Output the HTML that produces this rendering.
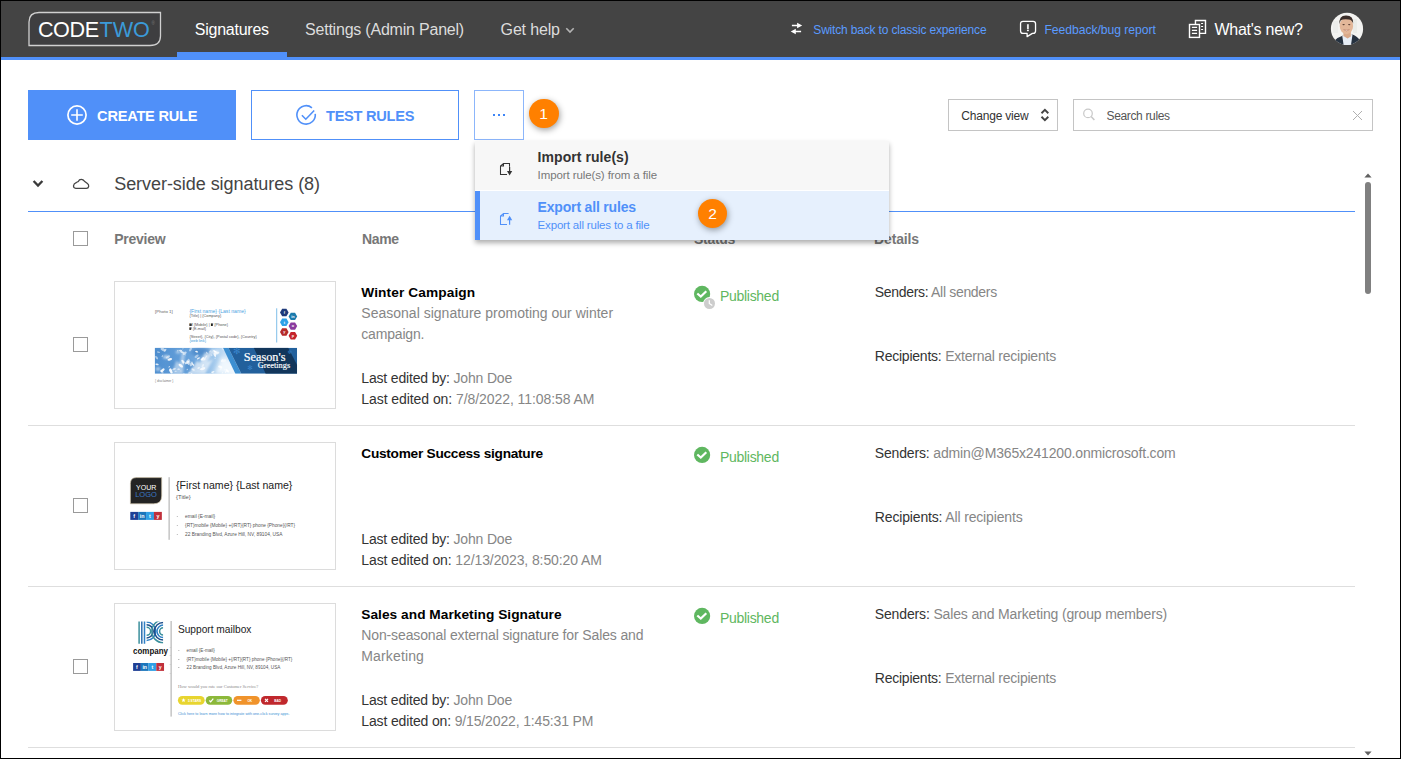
<!DOCTYPE html>
<html lang="en"><head><meta charset="utf-8"><title>CodeTwo Signatures</title>
<style>
html,body{margin:0;padding:0;background:#fff;}
body{width:1401px;height:759px;position:relative;overflow:hidden;font-family:"Liberation Sans",Arial,sans-serif;}
.a{position:absolute;box-sizing:border-box;}
.t{position:absolute;white-space:nowrap;line-height:1;}
svg{position:absolute;overflow:visible;}
</style></head><body>
<div class="a" style="left:0.00px;top:0.00px;width:1401.00px;height:57.00px;background:#444444;"></div>
<div class="a" style="left:0.00px;top:57.00px;width:1401.00px;height:3.00px;background:#5090f9;"></div>
<div class="a" style="left:177.00px;top:52.00px;width:110.00px;height:5.00px;background:#5090f9;"></div>
<svg style="left:0;top:0" width="200" height="60" viewBox="0 0 200 60"><path d="M39 12.5 H160.5 V36 Q160.5 45.5 150 45.5 H29 V22 Q29 12.5 39 12.5 Z" fill="#3e3e40" stroke="#d0d0d0" stroke-width="1.3"/></svg>
<div class="t " style="left:37.90px;top:19.00px;font-size:21.60px;color:#ffffff;letter-spacing:-0.402px;">CODE</div>
<div class="t " style="left:99.50px;top:19.00px;font-size:21.60px;color:#3b9ad9;letter-spacing:0.006px;">TWO</div>
<div class="t " style="left:151.50px;top:22.00px;font-size:4.50px;color:#777;">®</div>
<div class="t " style="left:194.80px;top:22.00px;font-size:16.00px;color:#ffffff;letter-spacing:-0.249px;">Signatures</div>
<div class="t " style="left:305.00px;top:22.00px;font-size:16.00px;color:#dcdcdc;letter-spacing:-0.211px;">Settings (Admin Panel)</div>
<div class="t " style="left:500.60px;top:22.00px;font-size:16.00px;color:#dcdcdc;letter-spacing:-0.161px;">Get help</div>
<svg style="left:565px;top:25px" width="10" height="10" viewBox="0 0 10 10"><path d="M1.3 3.3 L5 7.1 L8.7 3.3" fill="none" stroke="#b4b4b4" stroke-width="1.6"/></svg>
<svg style="left:789px;top:21px" width="15" height="15" viewBox="0 0 15 15"><path d="M2.9 4.5 H9 M6 10.5 H12.1" fill="none" stroke="#fff" stroke-width="1.5"/><path d="M8.1 1.7 L13.2 4.5 L8.1 7.3 Z M6.8 7.7 L1.7 10.5 L6.8 13.3 Z" fill="#fff"/></svg>
<div class="t " style="left:813.30px;top:24.00px;font-size:12.00px;color:#5a9bff;letter-spacing:-0.171px;">Switch back to classic experience</div>
<svg style="left:1019px;top:20px" width="19" height="18" viewBox="0 0 19 18"><path d="M4 1.35 H14.1 Q16.55 1.35 16.55 3.8 V10.9 Q16.55 13.35 14.1 13.35 H13.4 L8.1 16.6 V13.35 H4 Q1.55 13.35 1.55 10.9 V3.8 Q1.55 1.35 4 1.35 Z" fill="none" stroke="#fff" stroke-width="1.3" stroke-linejoin="round"/><path d="M8.9 4.2 V9.2" stroke="#e8e8e8" stroke-width="1.9"/><rect x="7.95" y="9.8" width="1.9" height="1.4" fill="#fff"/></svg>
<div class="t " style="left:1044.40px;top:24.00px;font-size:12.20px;color:#5a9bff;letter-spacing:-0.052px;">Feedback/bug report</div>
<svg style="left:1188px;top:19px" width="20" height="20" viewBox="0 0 20 20"><g fill="none" stroke="#fff" stroke-width="1.4"><rect x="1.5" y="5.5" width="10" height="12.9"/><path d="M7.45 5.5 V1.55 H17.5 V14.4 H11.5"/></g><g fill="none" stroke="#fff" stroke-width="1.1"><path d="M3.9 8.4 H9.1 M3.9 11.4 H9.1 M3.9 14.4 H9.1"/><path d="M13.1 4.5 H15.1 M13.1 7.5 H15.1 M13.1 10.5 H15.1"/></g></svg>
<div class="t " style="left:1214.50px;top:22.00px;font-size:16.00px;color:#ffffff;letter-spacing:-0.263px;">What's new?</div>
<svg style="left:1331px;top:13px" width="32" height="32" viewBox="0 0 32 32"><defs><clipPath id="av"><circle cx="16" cy="15.9" r="16.1"/></clipPath><filter id="avb" x="-10%" y="-10%" width="120%" height="120%"><feGaussianBlur stdDeviation="0.55"/></filter></defs>
<g clip-path="url(#av)"><rect x="-2" y="-2" width="36" height="36" fill="#f3f3f1"/><g filter="url(#avb)">
<rect x="22" y="6" width="4" height="14" fill="#eaece8"/><rect x="2" y="8" width="5" height="12" fill="#ecedeb"/>
<path d="M2 34 L4.2 27 Q7 24.2 12 22.4 L15.5 30 L21 21.2 Q27 23.6 28.6 27 L31 34 Z" fill="#27303f"/>
<path d="M11.2 22.6 L12.6 32 H20 L21.6 21 L17 24.5 Z" fill="#e6edf6"/>
<path d="M12.4 18 H19.8 V23.6 L16.6 25.6 L12.4 23 Z" fill="#d9a98a"/>
<ellipse cx="15.4" cy="12.9" rx="6.7" ry="8.3" fill="#e3b799"/>
<path d="M8.5 11.5 Q7.6 2.2 15.2 2.4 Q22.6 2.4 22.2 10.6 Q21 6.6 17.6 6.4 Q12 5.6 9.6 7.6 Q8.8 9.4 8.5 11.5 Z" fill="#3b2f2a"/>
<ellipse cx="12.6" cy="11.6" rx="1.2" ry="0.6" fill="#5b4034"/><ellipse cx="18.2" cy="11.6" rx="1.2" ry="0.6" fill="#5b4034"/>
<path d="M12.6 16.6 Q15.4 19.4 18.4 16.6 Q15.4 17.6 12.6 16.6 Z" fill="#f7efe9" stroke="#b77a66" stroke-width="0.5"/>
</g></g></svg>
<div class="a" style="left:28.00px;top:90.00px;width:208.00px;height:50.00px;background:#5090f9;"></div>
<svg style="left:66px;top:104px" width="22" height="22" viewBox="0 0 22 22"><circle cx="11" cy="11" r="9.1" fill="none" stroke="#fff" stroke-width="1.7"/><path d="M11 5.2 V16.8 M5.2 11 H16.8" stroke="#fff" stroke-width="1.6"/></svg>
<div class="t " style="left:97.10px;top:109.00px;font-size:14.60px;color:#ffffff;letter-spacing:-0.231px;font-weight:bold;">CREATE RULE</div>
<div class="a" style="left:251.00px;top:90.00px;width:208.00px;height:50.00px;border:1px solid #5090f9;background:#fff;"></div>
<svg style="left:295px;top:104px" width="22" height="22" viewBox="0 0 22 22"><path d="M20.23 9.78 A9.2 9.2 0 1 1 16.94 3.79" fill="none" stroke="#5090f9" stroke-width="1.6"/><path d="M6.9 11.3 L10.8 15.2 L19.2 6.5" fill="none" stroke="#5090f9" stroke-width="1.6"/></svg>
<div class="t " style="left:326.00px;top:109.00px;font-size:14.60px;color:#5090f9;letter-spacing:-0.265px;font-weight:bold;">TEST RULES</div>
<div class="a" style="left:474.00px;top:90.00px;width:50.00px;height:50.00px;border:1px solid #8cb6fb;background:#fff;"></div>
<div class="a" style="left:493.00px;top:114.00px;width:2.00px;height:2.00px;background:#3d85f7;"></div>
<div class="a" style="left:498.00px;top:114.00px;width:2.00px;height:2.00px;background:#3d85f7;"></div>
<div class="a" style="left:503.00px;top:114.00px;width:2.00px;height:2.00px;background:#3d85f7;"></div>
<div class="a" style="left:528.70px;top:98.60px;width:29.90px;height:29.90px;background:#ff8000;border-radius:50%;box-shadow:1px 2px 6px rgba(0,0,0,0.38);"></div>
<div class="t " style="left:539.30px;top:106.00px;font-size:15.50px;color:#fff;">1</div>
<div class="a" style="left:948.00px;top:99.00px;width:110.00px;height:32.00px;border:1px solid #c4c4c4;background:#fff;"></div>
<div class="t " style="left:961.30px;top:110.00px;font-size:12.00px;color:#333;letter-spacing:-0.198px;">Change view</div>
<svg style="left:1040px;top:108px" width="11" height="14" viewBox="0 0 11 14"><path d="M1.5 5.2 L4.9 1.9 L8.3 5.2 M1.5 8.8 L4.9 12.1 L8.3 8.8" fill="none" stroke="#444" stroke-width="1.9"/></svg>
<div class="a" style="left:1073.00px;top:99.00px;width:300.00px;height:32.00px;border:1px solid #c4c4c4;background:#fff;"></div>
<svg style="left:1082px;top:107px" width="14" height="14" viewBox="0 0 14 14"><circle cx="6" cy="6.4" r="4.3" fill="none" stroke="#c8c8c8" stroke-width="1.2"/><path d="M9.1 9.5 L12.4 13.1" stroke="#c8c8c8" stroke-width="1.5"/></svg>
<div class="t " style="left:1106.50px;top:110.00px;font-size:12.00px;color:#555;letter-spacing:-0.347px;">Search rules</div>
<svg style="left:1352px;top:110px" width="11" height="11" viewBox="0 0 11 11"><path d="M1 1 L10 10 M10 1 L1 10" stroke="#b0b0b0" stroke-width="1"/></svg>
<svg style="left:32px;top:179px" width="12" height="10" viewBox="0 0 12 10"><path d="M1.6 2 L6 6.6 L10.4 2" fill="none" stroke="#3a3a3a" stroke-width="2.3"/></svg>
<svg style="left:72px;top:178px" width="19" height="13" viewBox="0 0 19 13"><path d="M3.8 10.4 Q1.4 10.2 1.5 7.9 Q1.7 5.6 4.2 4.7 Q4.9 3.5 6.3 3.5 Q7.2 1.4 9.2 1.4 Q11.2 1.4 12.4 3.2 L15.4 5.6 Q16.9 6.8 16.7 8.4 Q16.4 10.4 14.4 10.4 Z" fill="none" stroke="#444" stroke-width="1.25" stroke-linejoin="round"/></svg>
<div class="t " style="left:114.20px;top:175.00px;font-size:18.00px;color:#444;letter-spacing:-0.049px;">Server-side signatures (8)</div>
<div class="a" style="left:28.00px;top:211.00px;width:1327.00px;height:1.00px;background:#5090f9;"></div>
<div class="a" style="left:73.00px;top:231.00px;width:15.00px;height:15.00px;border:1px solid #9a9a9a;background:#fff;"></div>
<div class="t " style="left:114.20px;top:232.00px;font-size:14.00px;color:#777;letter-spacing:-0.232px;font-weight:bold;">Preview</div>
<div class="t " style="left:362.00px;top:232.00px;font-size:14.00px;color:#777;letter-spacing:-0.333px;font-weight:bold;">Name</div>
<div class="t " style="left:694.00px;top:232.00px;font-size:14.00px;color:#777;letter-spacing:-0.298px;font-weight:bold;">Status</div>
<div class="t " style="left:874.00px;top:232.00px;font-size:14.00px;color:#777;letter-spacing:-0.130px;font-weight:bold;">Details</div>
<div class="a" style="left:28.00px;top:425.00px;width:1327.00px;height:1.00px;background:#dedede;"></div>
<div class="a" style="left:73.00px;top:337.00px;width:15.00px;height:15.00px;border:1px solid #9a9a9a;background:#fff;"></div>
<div class="a" style="left:114.00px;top:281.00px;width:222.00px;height:128.00px;border:1px solid #dcdcdc;background:#fff;"></div>
<div class="t " style="left:361.30px;top:286.00px;font-size:13.70px;color:#000;letter-spacing:0.105px;font-weight:bold;">Winter Campaign</div>
<div class="t " style="left:361.30px;top:306.00px;font-size:14.00px;color:#868686;letter-spacing:0.011px;">Seasonal signature promoting our winter</div>
<div class="t " style="left:361.30px;top:327.00px;font-size:14.00px;color:#868686;letter-spacing:-0.177px;">campaign.</div>
<div class="t" style="left:361.30px;top:371.00px;font-size:14.00px;letter-spacing:-0.170px;"><span style="color:#333">Last edited by: </span><span style="color:#868686">John Doe</span></div>
<div class="t" style="left:361.30px;top:392.00px;font-size:14.00px;letter-spacing:-0.067px;"><span style="color:#333">Last edited on: </span><span style="color:#868686">7/8/2022, 11:08:58 AM</span></div>
<svg style="left:694px;top:286px" width="24" height="26" viewBox="0 0 24 26"><circle cx="8.1" cy="7.9" r="8.1" fill="#5fb760"/><path d="M3.3 7.5 L6.8 10.6 L12.3 5.3" fill="none" stroke="#fff" stroke-width="2.2"/><circle cx="15.5" cy="17.5" r="6.4" fill="#fff"/><circle cx="15.5" cy="17.5" r="5.5" fill="#cdcdcd"/><path d="M15.3 14.2 V17.4 L18.3 19.4" fill="none" stroke="#fff" stroke-width="1.2"/></svg>
<div class="t " style="left:719.90px;top:289.00px;font-size:14.00px;color:#5fb760;letter-spacing:-0.277px;">Published</div>
<div class="t" style="left:874.80px;top:285.00px;font-size:14.00px;letter-spacing:-0.320px;"><span style="color:#333">Senders: </span><span style="color:#868686">All senders</span></div>
<div class="t" style="left:874.80px;top:349.00px;font-size:14.00px;letter-spacing:-0.233px;"><span style="color:#333">Recipients: </span><span style="color:#868686">External recipients</span></div>
<div class="a" style="left:28.00px;top:586.00px;width:1327.00px;height:1.00px;background:#dedede;"></div>
<div class="a" style="left:73.00px;top:498.00px;width:15.00px;height:15.00px;border:1px solid #9a9a9a;background:#fff;"></div>
<div class="a" style="left:114.00px;top:442.00px;width:222.00px;height:128.00px;border:1px solid #dcdcdc;background:#fff;"></div>
<div class="t " style="left:361.30px;top:447.00px;font-size:13.70px;color:#000;letter-spacing:-0.274px;font-weight:bold;">Customer Success signature</div>
<div class="t" style="left:361.30px;top:532.00px;font-size:14.00px;letter-spacing:-0.170px;"><span style="color:#333">Last edited by: </span><span style="color:#868686">John Doe</span></div>
<div class="t" style="left:361.30px;top:553.00px;font-size:14.00px;letter-spacing:-0.106px;"><span style="color:#333">Last edited on: </span><span style="color:#868686">12/13/2023, 8:50:20 AM</span></div>
<svg style="left:694px;top:447px" width="24" height="26" viewBox="0 0 24 26"><circle cx="8.1" cy="7.9" r="8.1" fill="#5fb760"/><path d="M3.3 7.5 L6.8 10.6 L12.3 5.3" fill="none" stroke="#fff" stroke-width="2.2"/></svg>
<div class="t " style="left:719.90px;top:450.00px;font-size:14.00px;color:#5fb760;letter-spacing:-0.277px;">Published</div>
<div class="t" style="left:874.80px;top:446.00px;font-size:14.00px;letter-spacing:-0.162px;"><span style="color:#333">Senders: </span><span style="color:#868686">admin@M365x241200.onmicrosoft.com</span></div>
<div class="t" style="left:874.80px;top:510.00px;font-size:14.00px;letter-spacing:-0.155px;"><span style="color:#333">Recipients: </span><span style="color:#868686">All recipients</span></div>
<div class="a" style="left:28.00px;top:747.00px;width:1327.00px;height:1.00px;background:#dedede;"></div>
<div class="a" style="left:73.00px;top:659.00px;width:15.00px;height:15.00px;border:1px solid #9a9a9a;background:#fff;"></div>
<div class="a" style="left:114.00px;top:603.00px;width:222.00px;height:128.00px;border:1px solid #dcdcdc;background:#fff;"></div>
<div class="t " style="left:361.30px;top:608.00px;font-size:13.70px;color:#000;letter-spacing:0.036px;font-weight:bold;">Sales and Marketing Signature</div>
<div class="t " style="left:361.30px;top:628.00px;font-size:14.00px;color:#868686;letter-spacing:-0.130px;">Non-seasonal external signature for Sales and</div>
<div class="t " style="left:361.30px;top:649.00px;font-size:14.00px;color:#868686;letter-spacing:0.137px;">Marketing</div>
<div class="t" style="left:361.30px;top:693.00px;font-size:14.00px;letter-spacing:-0.170px;"><span style="color:#333">Last edited by: </span><span style="color:#868686">John Doe</span></div>
<div class="t" style="left:361.30px;top:714.00px;font-size:14.00px;letter-spacing:-0.146px;"><span style="color:#333">Last edited on: </span><span style="color:#868686">9/15/2022, 1:45:31 PM</span></div>
<svg style="left:694px;top:608px" width="24" height="26" viewBox="0 0 24 26"><circle cx="8.1" cy="7.9" r="8.1" fill="#5fb760"/><path d="M3.3 7.5 L6.8 10.6 L12.3 5.3" fill="none" stroke="#fff" stroke-width="2.2"/></svg>
<div class="t " style="left:719.90px;top:611.00px;font-size:14.00px;color:#5fb760;letter-spacing:-0.277px;">Published</div>
<div class="t" style="left:874.80px;top:607.00px;font-size:14.00px;letter-spacing:-0.150px;"><span style="color:#333">Senders: </span><span style="color:#868686">Sales and Marketing (group members)</span></div>
<div class="t" style="left:874.80px;top:671.00px;font-size:14.00px;letter-spacing:-0.233px;"><span style="color:#333">Recipients: </span><span style="color:#868686">External recipients</span></div>
<svg style="left:0;top:0" width="1401" height="759" viewBox="0 0 1401 759" font-family="Liberation Sans, Arial, sans-serif">
<defs>
<linearGradient id="snow" x1="0" y1="0" x2="1" y2="0"><stop offset="0" stop-color="#4f8fd0"/><stop offset="0.4" stop-color="#69a3dc"/><stop offset="0.72" stop-color="#a9cdee"/><stop offset="0.95" stop-color="#eef6fd"/></linearGradient>
<filter id="bl" x="-20%" y="-20%" width="140%" height="140%"><feGaussianBlur stdDeviation="0.55"/></filter>
<filter id="bl3" x="-30%" y="-30%" width="160%" height="160%"><feGaussianBlur stdDeviation="1.1"/></filter>
<filter id="bl2" x="-30%" y="-30%" width="160%" height="160%"><feGaussianBlur stdDeviation="2"/></filter>
<clipPath id="ban"><rect x="154.7" y="347.7" width="142.4" height="26.1"/></clipPath>
</defs>
<text x="155.00" y="313.00" font-size="3.60" fill="#666" textLength="17.80" lengthAdjust="spacingAndGlyphs">[Photo 1]</text>
<text x="189.40" y="312.80" font-size="5.10" fill="#4aa3df" textLength="56.40" lengthAdjust="spacingAndGlyphs">{First name} {Last name}</text>
<text x="189.40" y="317.20" font-size="3.60" fill="#555" textLength="31.80" lengthAdjust="spacingAndGlyphs">{Title} | {Company}</text>
<text x="189.40" y="326.10" font-size="3.60" fill="#555" textLength="38.60" lengthAdjust="spacingAndGlyphs">M {Mobile} | P {Phone}</text>
<rect x="189.4" y="323.6" width="2.2" height="2.4" fill="#333"/><rect x="211" y="323.6" width="1.8" height="2.4" fill="#222"/><rect x="189.4" y="327.5" width="1.8" height="2.4" fill="#222"/>
<text x="189.40" y="329.90" font-size="3.60" fill="#555" textLength="16.60" lengthAdjust="spacingAndGlyphs">P {E-mail}</text>
<text x="189.40" y="338.20" font-size="3.60" fill="#555" textLength="67.40" lengthAdjust="spacingAndGlyphs">{Street}, {City}, {Postal code}, {Country}</text>
<text x="189.40" y="342.10" font-size="3.60" fill="#3f9ad8" textLength="16.60" lengthAdjust="spacingAndGlyphs">{web link}</text>
<rect x="276.2" y="308.3" width="1" height="34.2" fill="#7fbfe9"/>
<polygon points="288.60,312.50 286.45,316.22 282.15,316.22 280.00,312.50 282.15,308.78 286.45,308.78" fill="#1f3a7a"/>
<text x="284.30" y="313.85" font-size="3.8" font-weight="bold" fill="#fff" text-anchor="middle">f</text>
<polygon points="297.20,316.40 295.05,320.12 290.75,320.12 288.60,316.40 290.75,312.68 295.05,312.68" fill="#1c7bad"/>
<text x="292.90" y="317.75" font-size="3.8" font-weight="bold" fill="#fff" text-anchor="middle">in</text>
<polygon points="288.60,322.30 286.45,326.02 282.15,326.02 280.00,322.30 282.15,318.58 286.45,318.58" fill="#2ea1e8"/>
<text x="284.30" y="323.65" font-size="3.8" font-weight="bold" fill="#fff" text-anchor="middle">t</text>
<polygon points="297.20,326.10 295.05,329.82 290.75,329.82 288.60,326.10 290.75,322.38 295.05,322.38" fill="#8a3a9e"/>
<text x="292.90" y="327.45" font-size="3.8" font-weight="bold" fill="#fff" text-anchor="middle">o</text>
<polygon points="288.60,332.00 286.45,335.72 282.15,335.72 280.00,332.00 282.15,328.28 286.45,328.28" fill="#b52a2a"/>
<text x="284.30" y="333.35" font-size="3.8" font-weight="bold" fill="#fff" text-anchor="middle">y</text>
<polygon points="297.20,335.80 295.05,339.52 290.75,339.52 288.60,335.80 290.75,332.08 295.05,332.08" fill="#c4242b"/>
<text x="292.90" y="337.15" font-size="3.8" font-weight="bold" fill="#fff" text-anchor="middle">p</text>
<g clip-path="url(#ban)">
<rect x="154.7" y="347.7" width="86" height="26.1" fill="url(#snow)"/>
<g filter="url(#bl2)">
<ellipse cx="201" cy="352" rx="10" ry="5" fill="#3f7fc2" opacity="0.75"/>
<ellipse cx="190" cy="366" rx="6" ry="5" fill="#4c8bca" opacity="0.6"/>
<ellipse cx="160" cy="352" rx="5" ry="4" fill="#4c8bca" opacity="0.55"/>
<ellipse cx="172" cy="364" rx="4" ry="3" fill="#4c8bca" opacity="0.5"/>
<path d="M214 374 L222 356 L232 362 L238 374 Z" fill="#f4f9fe" opacity="0.9"/>
</g>
<g filter="url(#bl)" fill="#fff">
<ellipse cx="188.1" cy="362.5" rx="2.6" ry="1.3" opacity="0.68" transform="rotate(60 188.1 362.5)"/>
<ellipse cx="217.1" cy="353.2" rx="2.4" ry="1.2" opacity="0.69" transform="rotate(-23 217.1 353.2)"/>
<ellipse cx="162.3" cy="356.1" rx="0.9" ry="0.4" opacity="0.85" transform="rotate(-60 162.3 356.1)"/>
<ellipse cx="198.4" cy="358.4" rx="1.7" ry="0.8" opacity="0.82" transform="rotate(-30 198.4 358.4)"/>
<ellipse cx="200.4" cy="369.3" rx="0.8" ry="0.4" opacity="0.47" transform="rotate(-9 200.4 369.3)"/>
<ellipse cx="198.7" cy="368.0" rx="1.4" ry="0.7" opacity="0.75" transform="rotate(-20 198.7 368.0)"/>
<ellipse cx="192.9" cy="364.5" rx="1.7" ry="0.9" opacity="0.78" transform="rotate(47 192.9 364.5)"/>
<ellipse cx="202.6" cy="358.7" rx="1.9" ry="0.9" opacity="0.92" transform="rotate(-49 202.6 358.7)"/>
<ellipse cx="206.5" cy="356.4" rx="1.2" ry="0.6" opacity="0.59" transform="rotate(-53 206.5 356.4)"/>
<ellipse cx="196.0" cy="351.2" rx="0.9" ry="0.5" opacity="0.60" transform="rotate(-53 196.0 351.2)"/>
<ellipse cx="224.5" cy="369.7" rx="0.7" ry="0.4" opacity="0.55" transform="rotate(-57 224.5 369.7)"/>
<ellipse cx="189.3" cy="373.0" rx="1.5" ry="0.8" opacity="0.49" transform="rotate(-20 189.3 373.0)"/>
<ellipse cx="211.6" cy="355.2" rx="0.9" ry="0.4" opacity="0.62" transform="rotate(34 211.6 355.2)"/>
<ellipse cx="210.1" cy="351.4" rx="1.2" ry="0.6" opacity="0.50" transform="rotate(-55 210.1 351.4)"/>
<ellipse cx="189.0" cy="360.7" rx="2.1" ry="1.1" opacity="0.54" transform="rotate(60 189.0 360.7)"/>
<ellipse cx="169.2" cy="366.8" rx="1.0" ry="0.5" opacity="0.77" transform="rotate(-41 169.2 366.8)"/>
<ellipse cx="183.9" cy="373.3" rx="0.7" ry="0.4" opacity="0.88" transform="rotate(7 183.9 373.3)"/>
<ellipse cx="227.3" cy="349.0" rx="1.1" ry="0.5" opacity="0.95" transform="rotate(-45 227.3 349.0)"/>
<ellipse cx="158.5" cy="352.2" rx="1.6" ry="0.8" opacity="0.45" transform="rotate(14 158.5 352.2)"/>
<ellipse cx="215.3" cy="358.2" rx="0.9" ry="0.4" opacity="0.55" transform="rotate(-8 215.3 358.2)"/>
<ellipse cx="156.6" cy="357.7" rx="2.0" ry="1.0" opacity="0.51" transform="rotate(53 156.6 357.7)"/>
<ellipse cx="215.4" cy="351.9" rx="1.5" ry="0.8" opacity="0.76" transform="rotate(9 215.4 351.9)"/>
<ellipse cx="220.9" cy="368.9" rx="1.2" ry="0.6" opacity="0.54" transform="rotate(-20 220.9 368.9)"/>
<ellipse cx="205.0" cy="358.2" rx="1.7" ry="0.9" opacity="0.49" transform="rotate(-58 205.0 358.2)"/>
<ellipse cx="163.0" cy="349.5" rx="2.7" ry="1.4" opacity="0.57" transform="rotate(30 163.0 349.5)"/>
<ellipse cx="174.0" cy="369.1" rx="2.0" ry="1.0" opacity="0.60" transform="rotate(-26 174.0 369.1)"/>
<ellipse cx="222.4" cy="372.9" rx="1.0" ry="0.5" opacity="0.69" transform="rotate(-52 222.4 372.9)"/>
<ellipse cx="175.7" cy="371.4" rx="1.1" ry="0.6" opacity="0.46" transform="rotate(-2 175.7 371.4)"/>
<ellipse cx="185.1" cy="354.7" rx="0.8" ry="0.4" opacity="0.59" transform="rotate(65 185.1 354.7)"/>
<ellipse cx="196.7" cy="351.8" rx="1.5" ry="0.7" opacity="0.90" transform="rotate(14 196.7 351.8)"/>
<ellipse cx="202.8" cy="365.8" rx="1.9" ry="1.0" opacity="0.52" transform="rotate(-62 202.8 365.8)"/>
<ellipse cx="222.0" cy="360.4" rx="1.5" ry="0.7" opacity="0.61" transform="rotate(-62 222.0 360.4)"/>
<ellipse cx="157.0" cy="364.4" rx="1.7" ry="0.9" opacity="0.82" transform="rotate(11 157.0 364.4)"/>
<ellipse cx="165.3" cy="350.3" rx="1.7" ry="0.8" opacity="0.63" transform="rotate(-59 165.3 350.3)"/>
<ellipse cx="220.3" cy="366.9" rx="2.2" ry="1.1" opacity="0.85" transform="rotate(17 220.3 366.9)"/>
<ellipse cx="180.8" cy="365.6" rx="2.6" ry="1.3" opacity="0.89" transform="rotate(36 180.8 365.6)"/>
<ellipse cx="223.5" cy="349.3" rx="1.7" ry="0.9" opacity="0.46" transform="rotate(27 223.5 349.3)"/>
<ellipse cx="182.8" cy="348.8" rx="0.9" ry="0.4" opacity="0.50" transform="rotate(-41 182.8 348.8)"/>
<ellipse cx="227.0" cy="370.5" rx="2.2" ry="1.1" opacity="0.64" transform="rotate(47 227.0 370.5)"/>
<ellipse cx="187.2" cy="369.5" rx="0.9" ry="0.4" opacity="0.83" transform="rotate(-63 187.2 369.5)"/>
<ellipse cx="177.8" cy="350.7" rx="0.7" ry="0.4" opacity="0.93" transform="rotate(-42 177.8 350.7)"/>
<ellipse cx="191.3" cy="363.9" rx="2.6" ry="1.3" opacity="0.58" transform="rotate(-68 191.3 363.9)"/>
<ellipse cx="182.0" cy="352.1" rx="2.0" ry="1.0" opacity="0.71" transform="rotate(17 182.0 352.1)"/>
<ellipse cx="203.0" cy="359.5" rx="2.6" ry="1.3" opacity="0.61" transform="rotate(-6 203.0 359.5)"/>
<ellipse cx="169.8" cy="359.3" rx="2.4" ry="1.2" opacity="0.91" transform="rotate(-16 169.8 359.3)"/>
<ellipse cx="183.2" cy="363.1" rx="1.4" ry="0.7" opacity="0.52" transform="rotate(57 183.2 363.1)"/>
<ellipse cx="180.8" cy="370.9" rx="0.8" ry="0.4" opacity="0.48" transform="rotate(0 180.8 370.9)"/>
<ellipse cx="214.7" cy="351.3" rx="1.7" ry="0.8" opacity="0.91" transform="rotate(35 214.7 351.3)"/>
<ellipse cx="183.0" cy="361.5" rx="2.1" ry="1.1" opacity="0.81" transform="rotate(45 183.0 361.5)"/>
<ellipse cx="178.6" cy="369.2" rx="1.3" ry="0.6" opacity="0.75" transform="rotate(1 178.6 369.2)"/>
<ellipse cx="196.6" cy="356.2" rx="2.4" ry="1.2" opacity="0.46" transform="rotate(-36 196.6 356.2)"/>
<ellipse cx="184.7" cy="353.2" rx="2.3" ry="1.2" opacity="0.58" transform="rotate(-34 184.7 353.2)"/>
<ellipse cx="212.9" cy="373.1" rx="0.9" ry="0.5" opacity="0.50" transform="rotate(67 212.9 373.1)"/>
<ellipse cx="202.7" cy="368.7" rx="2.7" ry="1.4" opacity="0.79" transform="rotate(-19 202.7 368.7)"/>
<ellipse cx="214.8" cy="354.9" rx="2.2" ry="1.1" opacity="0.83" transform="rotate(66 214.8 354.9)"/>
<ellipse cx="206.9" cy="353.0" rx="1.3" ry="0.6" opacity="0.62" transform="rotate(63 206.9 353.0)"/>
<ellipse cx="191.5" cy="373.4" rx="1.0" ry="0.5" opacity="0.87" transform="rotate(-13 191.5 373.4)"/>
<ellipse cx="161.8" cy="371.8" rx="2.2" ry="1.1" opacity="0.51" transform="rotate(46 161.8 371.8)"/>
<ellipse cx="169.7" cy="370.7" rx="0.7" ry="0.4" opacity="0.73" transform="rotate(58 169.7 370.7)"/>
<ellipse cx="212.9" cy="372.1" rx="1.7" ry="0.8" opacity="0.78" transform="rotate(-18 212.9 372.1)"/>
<ellipse cx="162.6" cy="370.2" rx="2.4" ry="1.2" opacity="0.91" transform="rotate(-39 162.6 370.2)"/>
<ellipse cx="170.9" cy="371.0" rx="2.8" ry="1.4" opacity="0.94" transform="rotate(67 170.9 371.0)"/>
<ellipse cx="225.8" cy="371.8" rx="1.2" ry="0.6" opacity="0.81" transform="rotate(-66 225.8 371.8)"/>
<ellipse cx="180.6" cy="350.6" rx="1.6" ry="0.8" opacity="0.73" transform="rotate(0 180.6 350.6)"/>
<ellipse cx="190.6" cy="349.2" rx="2.4" ry="1.2" opacity="0.48" transform="rotate(-62 190.6 349.2)"/>
<ellipse cx="167.9" cy="356.9" rx="2.4" ry="1.2" opacity="0.52" transform="rotate(-32 167.9 356.9)"/>
<ellipse cx="227.5" cy="371.0" rx="1.8" ry="0.9" opacity="0.79" transform="rotate(42 227.5 371.0)"/>
<ellipse cx="223.6" cy="360.8" rx="2.7" ry="1.3" opacity="0.49" transform="rotate(-14 223.6 360.8)"/>
<ellipse cx="187.1" cy="362.5" rx="2.4" ry="1.2" opacity="0.73" transform="rotate(-28 187.1 362.5)"/>
<ellipse cx="193.1" cy="369.6" rx="1.9" ry="0.9" opacity="0.61" transform="rotate(27 193.1 369.6)"/>
</g>
<g filter="url(#bl3)" fill="#fff">
<path d="M188 374 L197 361 L200 363 L205 352 L208 354 L212 349 L214 351 L207 362 L213 359 L205 374 Z" opacity="0.6"/>
<path d="M172 374 L176 361 L180 363 L182 351 L185 353 L183 374 Z" opacity="0.45"/>
<ellipse cx="166" cy="357" rx="3" ry="2" opacity="0.55"/><ellipse cx="178" cy="352" rx="2.5" ry="1.6" opacity="0.5"/><ellipse cx="216" cy="352" rx="3" ry="2" opacity="0.6"/><ellipse cx="158" cy="369" rx="2.5" ry="2" opacity="0.5"/>
</g>
<polygon points="223,347.7 228.3,347.7 241.3,373.8 235.4,373.8" fill="#3d8fd1"/>
<polygon points="228.3,347.7 297.1,347.7 297.1,373.8 241.3,373.8" fill="#22609c"/>
<polygon points="253.8,347.7 288.2,347.7 297.1,365 297.1,373.8 265.7,373.8" fill="#12365b"/>
<g font-family="DejaVu Sans, sans-serif" text-anchor="middle" fill="#3a86cc"><text x="236.7" y="353.6" font-size="9">✻</text><text x="250" y="369.8" font-size="6.5">✻</text><text x="289.7" y="354.3" font-size="5.5" fill="#2f78bd">✻</text></g>
</g>
<text x="243.70" y="360.50" font-size="12.00" fill="#fff" textLength="41.80" lengthAdjust="spacingAndGlyphs" font-family="Liberation Serif, serif" stroke="#fff" stroke-width="0.2">Season's</text>
<text x="257.70" y="367.90" font-size="8.50" fill="#fff" textLength="32.50" lengthAdjust="spacingAndGlyphs" font-family="Liberation Serif, serif" stroke="#fff" stroke-width="0.15">Greetings</text>
<text x="155.00" y="382.00" font-size="2.80" fill="#777" textLength="18.40" lengthAdjust="spacingAndGlyphs">{ disclaimer }</text>
<path d="M136.3 477.6 H161.7 V496 Q161.7 503.8 153.5 503.8 H130.4 V483.6 Q130.4 477.6 136.3 477.6 Z" fill="#232323" stroke="#cfc3ab" stroke-width="0.7"/>
<text x="136.00" y="489.80" font-size="7.60" fill="#fff" textLength="20.40" lengthAdjust="spacingAndGlyphs">YOUR</text>
<text x="135.20" y="496.70" font-size="7.60" fill="#3a78c3" textLength="21.70" lengthAdjust="spacingAndGlyphs">LOGO</text>
<rect x="130.30" y="511.90" width="7.92" height="8.00" fill="#1f3f94"/>
<text x="134.24" y="517.98" font-size="5.3" font-weight="bold" fill="#fff" text-anchor="middle">f</text>
<rect x="138.18" y="511.90" width="7.92" height="8.00" fill="#1b76bb"/>
<text x="142.11" y="517.98" font-size="5.3" font-weight="bold" fill="#fff" text-anchor="middle">in</text>
<rect x="146.05" y="511.90" width="7.92" height="8.00" fill="#2f9fe5"/>
<text x="149.99" y="517.98" font-size="5.3" font-weight="bold" fill="#fff" text-anchor="middle">t</text>
<rect x="153.93" y="511.90" width="7.92" height="8.00" fill="#c0303b"/>
<text x="157.86" y="517.98" font-size="5.3" font-weight="bold" fill="#fff" text-anchor="middle">y</text>
<rect x="168.6" y="477.2" width="1" height="62.6" fill="#a8a8a8"/>
<text x="176.10" y="489.00" font-size="10.20" fill="#222" textLength="116.30" lengthAdjust="spacingAndGlyphs">{First name} {Last name}</text>
<text x="176.10" y="498.70" font-size="4.80" fill="#555" textLength="14.70" lengthAdjust="spacingAndGlyphs">{Title}</text>
<circle cx="177.20" cy="516.60" r="0.45" fill="#444"/>
<text x="185.10" y="517.90" font-size="4.60" fill="#555" textLength="30.00" lengthAdjust="spacingAndGlyphs">email {E-mail}</text>
<circle cx="177.20" cy="525.60" r="0.45" fill="#444"/>
<text x="185.10" y="526.90" font-size="4.60" fill="#555" textLength="109.90" lengthAdjust="spacingAndGlyphs">{RT}mobile {Mobile} +{/RT}{RT} phone {Phone}{/RT}</text>
<circle cx="177.20" cy="534.60" r="0.45" fill="#444"/>
<text x="185.10" y="535.90" font-size="4.60" fill="#555" textLength="97.40" lengthAdjust="spacingAndGlyphs">22 Branding Blvd, Azure Hill, NV, 89104, USA</text>
<clipPath id="lg3"><rect x="138" y="621.6" width="25.3" height="22.2"/></clipPath>
<g fill="none" stroke-width="1.5" clip-path="url(#lg3)">
<path d="M139.1 621 V644" stroke="#3b8f9c"/>
<path d="M141.8 621 V644" stroke="#2e6fae"/>
<path d="M144.5 621 V644" stroke="#2f80c5"/>
<path d="M146.6 627.3 A 4.0 4.0 0 0 1 146.6 635.3" stroke="#3b8f9c"/>
<path d="M146.6 624.7 A 6.6 6.6 0 0 1 146.6 637.9" stroke="#1f4f8a"/>
<path d="M146.6 622.1 A 9.2 9.2 0 0 1 146.6 640.5" stroke="#2f80c5"/>
<path d="M163.2 627.7 A 3.6 3.6 0 0 0 163.2 634.9" stroke="#3b8f9c"/>
<path d="M163.2 625.1 A 6.2 6.2 0 0 0 163.2 637.5" stroke="#2f80c5"/>
<path d="M163.2 622.5 A 8.8 8.8 0 0 0 163.2 640.1" stroke="#1f4f8a"/>
<path d="M163.2 619.9 A 11.4 11.4 0 0 0 163.2 642.7" stroke="#3b8f9c"/>
</g>
<text x="133.00" y="654.30" font-size="8.70" fill="#111" textLength="35.00" lengthAdjust="spacingAndGlyphs" font-weight="bold">company</text>
<rect x="133.10" y="663.00" width="7.77" height="7.90" fill="#1f3f94"/>
<text x="136.96" y="669.00" font-size="5.2" font-weight="bold" fill="#fff" text-anchor="middle">f</text>
<rect x="140.82" y="663.00" width="7.77" height="7.90" fill="#1b76bb"/>
<text x="144.69" y="669.00" font-size="5.2" font-weight="bold" fill="#fff" text-anchor="middle">in</text>
<rect x="148.55" y="663.00" width="7.77" height="7.90" fill="#2f9fe5"/>
<text x="152.41" y="669.00" font-size="5.2" font-weight="bold" fill="#fff" text-anchor="middle">t</text>
<rect x="156.27" y="663.00" width="7.77" height="7.90" fill="#c0303b"/>
<text x="160.14" y="669.00" font-size="5.2" font-weight="bold" fill="#fff" text-anchor="middle">y</text>
<rect x="170.6" y="621" width="1" height="95.6" fill="#a8a8a8"/>
<rect x="169.6" y="647.4" width="1.5" height="0.5" fill="#bdbdbd"/>
<rect x="169.6" y="655.3" width="1.5" height="0.5" fill="#bdbdbd"/>
<rect x="169.6" y="664.4" width="1.5" height="0.5" fill="#bdbdbd"/>
<rect x="169.6" y="673.5" width="1.5" height="0.5" fill="#bdbdbd"/>
<text x="177.90" y="633.00" font-size="10.30" fill="#222" textLength="73.50" lengthAdjust="spacingAndGlyphs">Support mailbox</text>
<circle cx="178.90" cy="650.60" r="0.45" fill="#444"/>
<text x="186.60" y="651.90" font-size="4.60" fill="#555" textLength="28.30" lengthAdjust="spacingAndGlyphs">email {E-mail}</text>
<circle cx="178.90" cy="659.50" r="0.45" fill="#444"/>
<text x="186.60" y="660.80" font-size="4.60" fill="#555" textLength="105.80" lengthAdjust="spacingAndGlyphs">{RT}mobile {Mobile} +{/RT}{RT} phone {Phone}{/RT}</text>
<circle cx="178.90" cy="667.50" r="0.45" fill="#444"/>
<text x="186.60" y="668.80" font-size="4.60" fill="#555" textLength="93.80" lengthAdjust="spacingAndGlyphs">22 Branding Blvd, Azure Hill, NV, 89104, USA</text>
<text x="177.90" y="687.80" font-size="3.40" fill="#888" textLength="80.40" lengthAdjust="spacingAndGlyphs" font-family="Liberation Serif, serif">How would you rate our Customer Service?</text>
<rect x="177.90" y="696" width="26.80" height="8.7" rx="4.35" fill="#e8d52f"/>
<path d="M183.50 698.10 l0.6 1.4 l1.5 0.1 l-1.15 1 l0.4 1.5 l-1.35 -0.85 l-1.35 0.85 l0.4 -1.5 l-1.15 -1 l1.5 -0.1 z" fill="#fff"/>
<text x="194.52" y="701.5" font-size="3.2" font-weight="bold" fill="#fff" text-anchor="middle">5 STARS</text>
<rect x="205.70" y="696" width="26.50" height="8.7" rx="4.35" fill="#8cb83a"/>
<path d="M209.40 700.50 l1.3 1.4 l2.6 -3.2" fill="none" stroke="#fff" stroke-width="1.2"/>
<text x="222.13" y="701.5" font-size="3.2" font-weight="bold" fill="#fff" text-anchor="middle">GREAT</text>
<rect x="233.40" y="696" width="26.40" height="8.7" rx="4.35" fill="#f0932b"/>
<path d="M237.00 700.30 h4.4" fill="none" stroke="#fff" stroke-width="1.2"/>
<text x="249.77" y="701.5" font-size="3.2" font-weight="bold" fill="#fff" text-anchor="middle">OK</text>
<rect x="260.90" y="696" width="26.90" height="8.7" rx="4.35" fill="#c0282d"/>
<path d="M265.00 698.80 l3 3 m0 -3 l-3 3" fill="none" stroke="#fff" stroke-width="1.2"/>
<text x="277.58" y="701.5" font-size="3.2" font-weight="bold" fill="#fff" text-anchor="middle">BAD</text>
<text x="177.90" y="714.50" font-size="3.40" fill="#3b8fd4" textLength="111.60" lengthAdjust="spacingAndGlyphs">Click here to learn more how to integrate with one-click survey apps.</text>
</svg>
<div class="a" style="left:474.50px;top:140.50px;width:414.00px;height:99.50px;background:#f7f7f7;box-shadow:0 3px 5px rgba(0,0,0,0.32);"></div>
<div class="a" style="left:474.50px;top:190.50px;width:414.00px;height:49.50px;background:#e6f0fd;"></div>
<div class="a" style="left:474.50px;top:190.00px;width:414.00px;height:1.00px;background:#fff;"></div>
<div class="a" style="left:474.50px;top:190.50px;width:5.50px;height:49.50px;background:#5090f9;"></div>
<svg style="left:499px;top:162px" width="15" height="15" viewBox="0 0 15 15"><path d="M8 12.5 H1.5 V4 L4.5 1.5 H10.5 V4.8 M4.5 1.5 V4 H1.5" fill="none" stroke="#333" stroke-width="1.05" stroke-linejoin="miter"/><path d="M10.6 5 V11.6" fill="none" stroke="#333" stroke-width="1.2"/><path d="M8 9 L10.6 13.4 L13.2 9 Z" fill="#333"/></svg>
<svg style="left:499px;top:212px" width="15" height="15" viewBox="0 0 15 15"><path d="M8 12.5 H1.5 V4 L4.5 1.5 H9.6 M4.5 1.5 V4 H1.5" fill="none" stroke="#5090f9" stroke-width="1.05" stroke-linejoin="miter"/><path d="M10.6 12.8 V5" fill="none" stroke="#5090f9" stroke-width="1.2"/><path d="M8 8.2 L10.6 3.8 L13.2 8.2 Z" fill="#5090f9"/></svg>
<div class="t " style="left:537.60px;top:150.00px;font-size:14.00px;color:#333;letter-spacing:0.062px;font-weight:bold;">Import rule(s)</div>
<div class="t " style="left:537.60px;top:170.00px;font-size:11.50px;color:#777;letter-spacing:-0.102px;">Import rule(s) from a file</div>
<div class="t " style="left:537.60px;top:200.00px;font-size:14.00px;color:#5090f9;letter-spacing:-0.178px;font-weight:bold;">Export all rules</div>
<div class="t " style="left:537.60px;top:220.00px;font-size:11.50px;color:#5090f9;letter-spacing:-0.174px;">Export all rules to a file</div>
<div class="a" style="left:697.60px;top:198.60px;width:29.90px;height:29.90px;background:#ff8000;border-radius:50%;box-shadow:1px 2px 6px rgba(0,0,0,0.38);"></div>
<div class="t " style="left:708.20px;top:206.00px;font-size:15.50px;color:#fff;">2</div>
<div class="a" style="left:1365.00px;top:182.00px;width:6.00px;height:112.00px;background:#808080;border-radius:3px;"></div>
<svg style="left:1364px;top:173px" width="8" height="5" viewBox="0 0 8 5"><path d="M0.4 4.4 L4 0.6 L7.6 4.4 Z" fill="#606060"/></svg>
<svg style="left:1364px;top:751px" width="8" height="5" viewBox="0 0 8 5"><path d="M0.4 0.6 L4 4.4 L7.6 0.6 Z" fill="#606060"/></svg>
<div class="a" style="left:0.00px;top:0.00px;width:1401.00px;height:759.00px;border:1px solid #000;pointer-events:none;"></div>
</body></html>
